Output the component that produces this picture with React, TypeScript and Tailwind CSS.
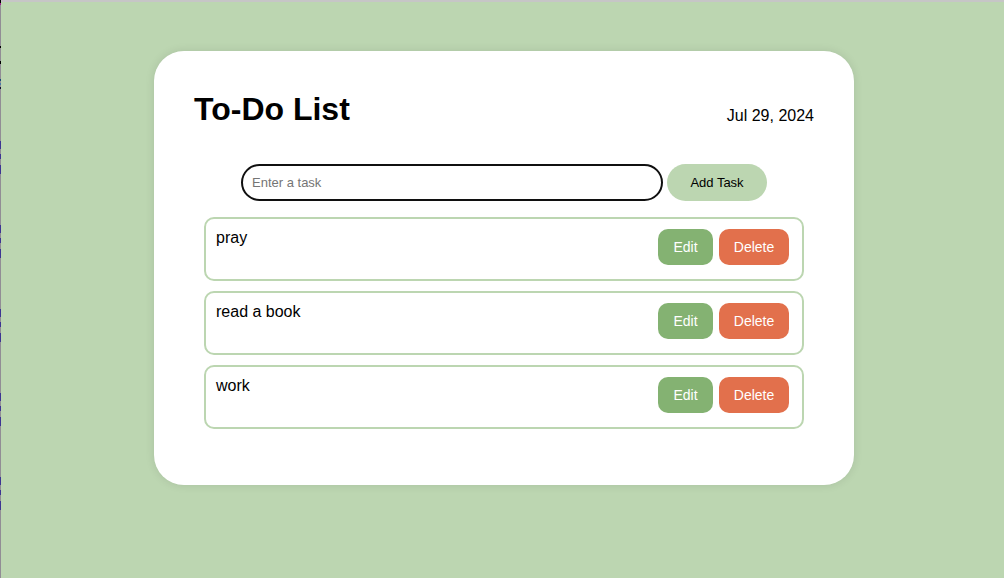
import { useState } from 'react';

const initialTasks = ['pray', 'read a book', 'work'];

const edgeGroups = [0, 1, 2, 3, 4];

function EdgeStrip() {
  return (
    <div aria-hidden="true" className="w-px shrink-0 bg-[#918d95]">
      <div className="h-[3px] bg-black" />
      <div className="h-[2px] bg-[#a02090]" />
      <div className="mt-[41px] h-[2px] bg-black" />
      <div className="mt-[13px] h-[3px] bg-black" />
      <div className="mt-[15px] h-[2px] bg-[#174a78]" />
      <div className="mt-[2px] h-[2px] bg-[#4a78a8]" />
      <div className="mt-[2px] h-[2px] bg-[#101030]" />
      <div className="mt-[52px]">
        {edgeGroups.map((group) => (
          <div key={group} className="h-[84px]">
            <div className="h-2 bg-[#3d3593]" />
            <div className="mt-[5px] h-[5px] bg-[#3d3593]" />
            <div className="mt-[6px] h-[9px] bg-[#3d3593]" />
          </div>
        ))}
      </div>
    </div>
  );
}

export default function App() {
  const [tasks, setTasks] = useState<string[]>(initialTasks);
  const [draft, setDraft] = useState('');

  const addTask = (event: React.FormEvent) => {
    event.preventDefault();
    if (!draft.trim()) return;
    setTasks([...tasks, draft.trim()]);
    setDraft('');
  };

  const editTask = (index: number) => {
    setDraft(tasks[index]);
    setTasks(tasks.filter((_, i) => i !== index));
  };

  const deleteTask = (index: number) => setTasks(tasks.filter((_, i) => i !== index));

  return (
    <div className="flex min-h-screen bg-[#bcd6b1] font-['Liberation_Sans',Arial,sans-serif] text-base text-black">
      <EdgeStrip />
      <div className="min-w-0 flex-1 border-t-2 border-[#c6c6c6] pt-[49px] pr-[15px] pb-12 pl-[18px]">
        <main className="mx-auto w-full max-w-[700px] rounded-[30px] bg-white px-10 pt-10 pb-14 shadow-[0_0_10px_rgba(0,0,0,0.1)]">
          <header className="flex items-end justify-between">
            <h1 className="text-[32px] leading-9 font-bold">To-Do List</h1>
            <time dateTime="2024-07-29" className="leading-[22px]">Jul 29, 2024</time>
          </header>
          <form onSubmit={addTask} className="mt-[37px] flex justify-center gap-1">
            <input
              type="text"
              aria-label="Task"
              placeholder="Enter a task"
              value={draft}
              onChange={(event) => setDraft(event.target.value)}
              className="h-[37px] w-[422px] min-w-0 rounded-full border-2 border-[#101010] px-[9px] text-[13px] outline-none placeholder:text-[#757575]"
            />
            <button type="submit" className="h-[37px] w-[100px] shrink-0 rounded-full bg-[#bcd6b1] text-[13px]">
              Add Task
            </button>
          </form>
          <ul className="mx-[10px] mt-4 flex flex-col gap-[10px]">
            {tasks.map((task, index) => (
              <li key={index} className="flex h-16 items-start justify-between rounded-[10px] border-2 border-[#bcd6b1] py-[10px] pr-[13px] pl-[10px]">
                <span className="leading-[18px]">{task}</span>
                <div className="flex gap-[6px]">
                  <button type="button" onClick={() => editTask(index)} className="h-9 w-[55px] rounded-[10px] bg-[#84b272] text-sm text-white">
                    Edit
                  </button>
                  <button type="button" onClick={() => deleteTask(index)} className="h-9 w-[70px] rounded-[10px] bg-[#e2704c] text-sm text-white">
                    Delete
                  </button>
                </div>
              </li>
            ))}
          </ul>
        </main>
      </div>
    </div>
  );
}
